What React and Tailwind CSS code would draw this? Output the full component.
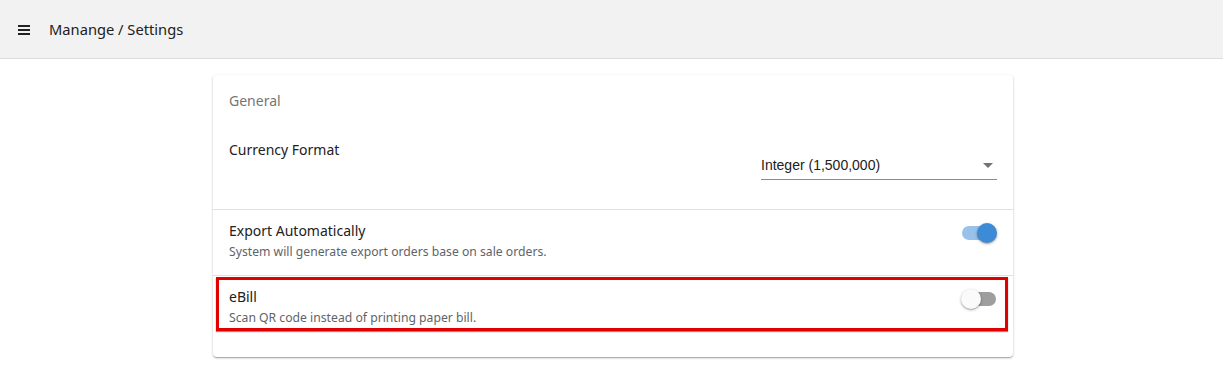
import { useState } from 'react';

function Toggle({ on }) {
  return (
    <div className="relative w-[36px] h-[20px] flex items-center shrink-0">
      <div className={`w-[34px] h-[14px] rounded-full ml-[1px] ${on ? 'bg-[#98c2ea]' : 'bg-[#9e9e9e]'}`} />
      <div
        className={`absolute top-0 w-[20px] h-[20px] rounded-full shadow-[0_1px_3px_rgba(0,0,0,0.3),0_1px_1px_rgba(0,0,0,0.14)] ${
          on ? 'left-[16px] bg-[#3d8ad6]' : 'left-[0px] bg-[#fafafa]'
        }`}
      />
    </div>
  );
}

function SettingRow({ title, sub, on, highlight }) {
  return (
    <div className="relative flex items-start justify-between pl-[16px] pr-[16px] pt-[11px] pb-[14px]">
      <div>
        <p className="text-[14px] leading-[20px] text-[#212121]">{title}</p>
        <p className="mt-[2px] text-[12.2px] leading-[18px] text-[#5f6368]">{sub}</p>
      </div>
      <div className="mt-[2px]">
        <Toggle on={on} />
      </div>
      {highlight && (
        <div className="absolute left-[3px] right-[5px] top-[1px] h-[54px] border-[3px] border-[#e00000] shadow-[0_1px_1px_rgba(0,0,0,0.45)] pointer-events-none" />
      )}
    </div>
  );
}

export default function App() {
  const [format] = useState('Integer (1,500,000)');

  return (
    <div className="min-h-[370px] bg-white font-['Noto_Sans','Lato',sans-serif]">
      {/* Top bar */}
      <div className="h-[59px] bg-[#f2f2f2] border-b border-[#dcdcdc] flex items-center">
        <svg className="ml-[18px] mt-[1px]" width="12" height="10" viewBox="0 0 12 10">
          <rect x="0" y="0" width="12" height="2" fill="#222" />
          <rect x="0" y="4" width="12" height="2" fill="#222" />
          <rect x="0" y="8" width="12" height="2" fill="#222" />
        </svg>
        <span className="ml-[19px] text-[14.7px] text-[#212121]">Manange / Settings</span>
      </div>

      <div className="pt-[16px] pl-[213px]">
        <div className="w-[800px] bg-white rounded-[4px] shadow-[0_1px_3px_rgba(0,0,0,0.2),0_1px_1px_rgba(0,0,0,0.14),0_2px_1px_-1px_rgba(0,0,0,0.12)] pb-[16px]">
          {/* General */}
          <div className="px-[16px] pt-[16px]">
            <p className="text-[14px] leading-[20px] text-[#757575]">General</p>
            <div className="flex items-start justify-between pt-[29px] pb-[29px]">
              <p className="text-[14px] leading-[20px] text-[#212121]">Currency Format</p>
              <div className="w-[236px] mt-[15px] border-b border-[#8a8a8a] flex items-center justify-between pb-[4px]">
                <span className="font-['Liberation_Sans',sans-serif] text-[14px] leading-[20px] text-[#212121]">{format}</span>
                <svg className="mr-[4px]" width="10" height="5" viewBox="0 0 10 5">
                  <path d="M0 0 L10 0 L5 5 Z" fill="#737373" />
                </svg>
              </div>
            </div>
          </div>

          <div className="border-t border-[#e0e0e0]" />
          <SettingRow title="Export Automatically" sub="System will generate export orders base on sale orders." on />
          <div className="border-t border-[#e0e0e0]" />
          <SettingRow title="eBill" sub="Scan QR code instead of printing paper bill." on={false} highlight />
        </div>
      </div>
    </div>
  );
}
